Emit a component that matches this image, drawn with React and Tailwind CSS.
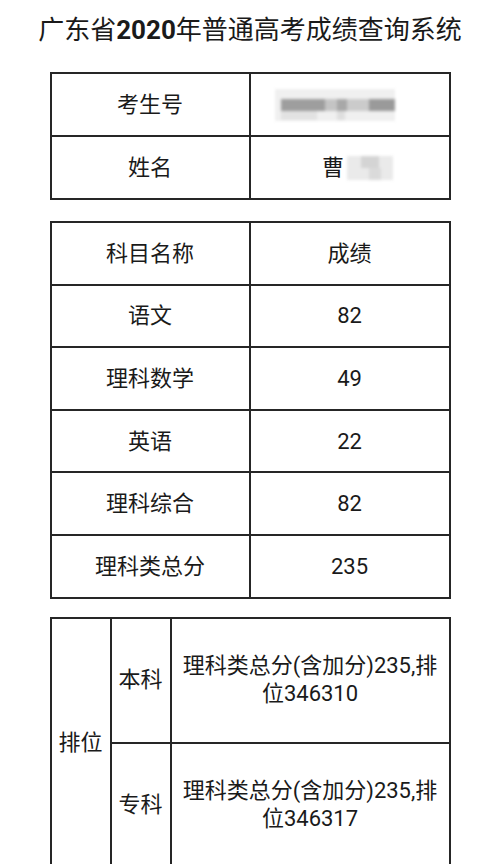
import React from "react";

const font = "font-['Roboto','Noto_Sans_CJK_SC',sans-serif]";

const scores = [
    { name: "语文", score: "82" },
    { name: "理科数学", score: "49" },
    { name: "英语", score: "22" },
    { name: "理科综合", score: "82" },
    { name: "理科类总分", score: "235" },
];

const cell = "border-2 border-[#262626] text-center align-middle";

// pixelated blur standing in for the masked personal data
function Mosaic({ blocks, className }) {
    return (
        <div className={`relative blur-[1.5px] ${className}`}>
            {blocks.map((b, i) => (
                <div
                    key={i}
                    className="absolute"
                    style={{ left: b[0], top: b[1], width: b[2], height: b[3], background: b[4] }}
                />
            ))}
        </div>
    );
}

const idBlocks = [
    [0, 0, 120, 32, "#f0f0f0"],
    [6, 10, 44, 12, "#9e9e9e"],
    [50, 10, 12, 12, "#c4c4c4"],
    [62, 10, 10, 12, "#a8a8a8"],
    [72, 10, 22, 12, "#cbcbcb"],
    [94, 10, 26, 12, "#9a9a9a"],
    [6, 22, 36, 9, "#e2e2e2"],
    [62, 22, 8, 9, "#dedede"],
];

const nameBlocks = [
    [0, 0, 46, 24, "#eaeaea"],
    [14, 0, 18, 12, "#d4d4d4"],
    [22, 12, 12, 12, "#dadada"],
];

export default function App() {
    return (
        <div className={`${font} bg-white text-[#1a1a1a] w-[500px] h-[864px] overflow-hidden`}>
            <h1 className="text-[26px] leading-none text-center pt-[17px]">
                广东省<span className="font-bold">2020</span>年普通高考成绩查询系统
            </h1>

            <table className="border-collapse w-[401px] mx-auto mt-[29px] text-[22px]">
                <tbody>
                    <tr className="h-[63px]">
                        <td className={`${cell} w-[199px]`}>考生号</td>
                        <td className={cell}>
                            <div className="flex justify-center">
                                <Mosaic blocks={idBlocks} className="w-[120px] h-[32px] ml-[-30px]" />
                            </div>
                        </td>
                    </tr>
                    <tr className="h-[63px]">
                        <td className={cell}>姓名</td>
                        <td className={cell}>
                            <div className="flex justify-center items-center ml-[16px]">
                                <span>曹</span>
                                <Mosaic blocks={nameBlocks} className="w-[46px] h-[24px] ml-[3px]" />
                            </div>
                        </td>
                    </tr>
                </tbody>
            </table>

            <table className="border-collapse w-[401px] mx-auto mt-[21px] text-[22px]">
                <tbody>
                    <tr className="h-[62.6px]">
                        <td className={`${cell} w-[199px]`}>科目名称</td>
                        <td className={cell}>成绩</td>
                    </tr>
                    {scores.map((s) => (
                        <tr key={s.name} className="h-[62.6px]">
                            <td className={cell}>{s.name}</td>
                            <td className={cell}>{s.score}</td>
                        </tr>
                    ))}
                </tbody>
            </table>

            <table className="border-collapse w-[401px] mx-auto mt-[18px] text-[22px] leading-[28px]">
                <tbody>
                    <tr className="h-[125px]">
                        <td rowSpan={2} className={`${cell} w-[60px]`}>排位</td>
                        <td className={`${cell} w-[60px]`}>本科</td>
                        <td className={`${cell} px-[6px]`}>
                            理科类总分(含加分)235,排<br />位346310
                        </td>
                    </tr>
                    <tr className="h-[125px]">
                        <td className={cell}>专科</td>
                        <td className={`${cell} px-[6px]`}>
                            理科类总分(含加分)235,排<br />位346317
                        </td>
                    </tr>
                </tbody>
            </table>
        </div>
    );
}
